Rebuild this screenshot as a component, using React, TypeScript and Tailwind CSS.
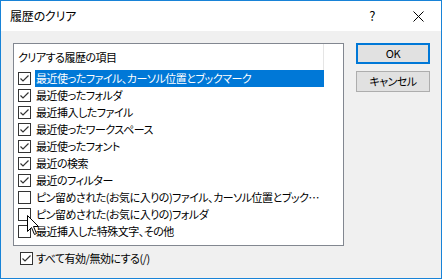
import React from "react";

const items: { label: string; checked: boolean }[] = [
  { label: "最近使ったファイル、カーソル位置とブックマーク", checked: true },
  { label: "最近使ったフォルダ", checked: true },
  { label: "最近挿入したファイル", checked: true },
  { label: "最近使ったワークスペース", checked: true },
  { label: "最近使ったフォント", checked: true },
  { label: "最近の検索", checked: true },
  { label: "最近のフィルター", checked: true },
  { label: "ピン留めされた(お気に入りの)ファイル、カーソル位置とブックマーク", checked: false },
  { label: "ピン留めされた(お気に入りの)フォルダ", checked: false },
  { label: "最近挿入した特殊文字、その他", checked: false },
];

function Check({ checked }: { checked: boolean }) {
  return (
    <div className="w-[13px] h-[13px] shrink-0 border border-[#333333] bg-white flex items-center justify-center">
      {checked && (
        <svg width="11" height="11" viewBox="0 0 11 11">
          <path d="M1.5 5.5 L4 8 L9.5 2.5" fill="none" stroke="#333333" strokeWidth="1.2" />
        </svg>
      )}
    </div>
  );
}

export default function App() {
  const font = {
    fontFamily: '"Noto Sans CJK JP", "Liberation Sans", sans-serif',
    fontFeatureSettings: '"palt"',
  };
  return (
    <div
      className="w-[442px] h-[279px] border border-[#1883d7] bg-[#f0f0f0] flex flex-col text-[11px] tracking-[-0.5px] text-black relative overflow-hidden"
      style={font}
    >
      {/* title bar */}
      <div className="h-[30px] bg-white flex items-center shrink-0">
        <div className="pl-[9px] flex-1 text-[12px] tracking-[-0.2px]">履歴のクリア</div>
        <div className="w-[46px] text-center text-[13px]">?</div>
        <div className="w-[46px] h-full flex items-center justify-center">
          <svg width="11" height="11" viewBox="0 0 11 11">
            <path d="M0.5 0.5 L10.5 10.5 M10.5 0.5 L0.5 10.5" stroke="#000" strokeWidth="1" />
          </svg>
        </div>
      </div>

      {/* body */}
      <div className="flex flex-col pl-[12px] pt-[12px]">
        <div className="flex">
          <div className="w-[331px] h-[203px] border border-[#828790] bg-white flex flex-col">
            <div className="h-[26px] w-[310px] border-r border-[#e5e5e5] flex items-center pl-[4px] shrink-0">
              クリアする履歴の項目
            </div>
            {items.map((it, i) => (
              <div key={i} className="h-[17px] w-[310px] flex items-center pl-[4px]">
                <Check checked={it.checked} />
                <div
                  className={`ml-[4px] h-[17px] flex-1 min-w-0 pl-[1px] leading-[17px] truncate ${
                    i === 0 ? "bg-[#0078d7] text-white" : ""
                  }`}
                >
                  {it.label}
                </div>
              </div>
            ))}
          </div>

          <div className="ml-[12px] flex flex-col gap-[7px]">
            <button
              type="button"
              className="w-[74px] h-[21px] border-2 border-[#0078d7] bg-[#e1e1e1] text-[11px] flex items-center justify-center"
            >
              OK
            </button>
            <button
              type="button"
              className="w-[74px] h-[21px] border border-[#adadad] bg-[#e1e1e1] text-[11px] flex items-center justify-center"
            >
              キャンセル
            </button>
          </div>
        </div>

        <div className="mt-[6px] ml-[7px] flex items-center h-[13px]">
          <Check checked={true} />
          <span className="ml-[3px]">すべて有効/無効にする(/)</span>
        </div>
      </div>

      {/* mouse cursor */}
      <svg
        className="absolute left-[26px] top-[214px]"
        width="13"
        height="21"
        viewBox="0 0 13 21"
      >
        <path
          d="M0.5 0.5 L0.5 16.5 L4.5 12.5 L7.5 19.5 L9.5 18.5 L6.5 11.5 L11.5 11.5 Z"
          fill="#fff"
          stroke="#000"
          strokeWidth="1"
        />
      </svg>
    </div>
  );
}
